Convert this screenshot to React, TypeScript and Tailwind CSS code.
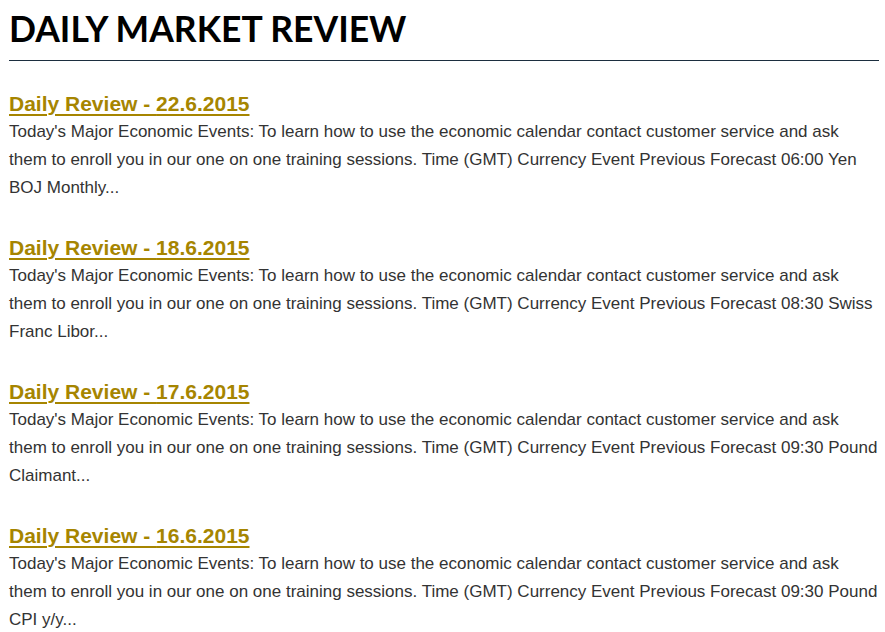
const entries = [
  { date: "22.6.2015", tail: "06:00 Yen BOJ Monthly..." },
  { date: "18.6.2015", tail: "08:30 Swiss Franc Libor..." },
  { date: "17.6.2015", tail: "09:30 Pound Claimant..." },
  { date: "16.6.2015", tail: "09:30 Pound CPI y/y..." },
];

export default function App() {
  return (
    <div className="min-h-screen bg-white px-[9px]">
      <div className="w-[870px]">
        {/* Page heading */}
        <h1 className="pt-[7px] pb-[9px] text-[35.5px] leading-[44px] font-bold text-black border-b border-[#1c2e3f] font-['Lato',sans-serif]">
          DAILY MARKET REVIEW
        </h1>

        {/* Reviews */}
        <div className="pt-[28px] font-['Liberation_Sans',Arial,sans-serif]">
          {entries.map((e) => (
            <div key={e.date} className="mb-[31px]">
              <a
                href="#"
                className="block text-[21px] leading-[29px] font-bold text-[#a68500] underline underline-offset-[3px] decoration-2"
              >
                Daily Review - {e.date}
              </a>
              <p className="text-[17px] leading-[28px] text-[#333]">
                Today's Major Economic Events: To learn how to use the economic calendar contact customer service and ask them to enroll you in our one on one training sessions. Time (GMT) Currency Event Previous Forecast {e.tail}
              </p>
            </div>
          ))}
        </div>
      </div>
    </div>
  );
}
